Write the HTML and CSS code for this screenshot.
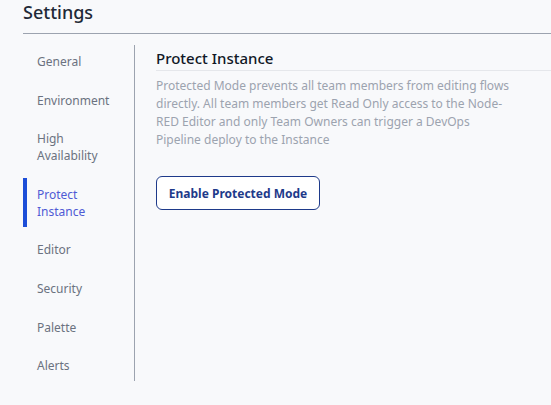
FILE: index.html
```html
<!DOCTYPE html>
<html>
<head>
<meta charset="utf-8">
<link rel="stylesheet" href="styles.css">
</head>
<body>
<div class="page">
  <h1 class="title">Settings</h1>
  <div class="layout">
    <nav class="nav">
      <a class="nav-item">General</a>
      <a class="nav-item">Environment</a>
      <a class="nav-item">High<br>Availability</a>
      <a class="nav-item active">Protect<br>Instance</a>
      <a class="nav-item">Editor</a>
      <a class="nav-item">Security</a>
      <a class="nav-item">Palette</a>
      <a class="nav-item">Alerts</a>
    </nav>
    <main class="content">
      <h2 class="section-title">Protect Instance</h2>
      <p class="desc">Protected Mode prevents all team members from editing flows directly. All team members get Read Only access to the Node-RED Editor and only Team Owners can trigger a DevOps Pipeline deploy to the Instance</p>
      <button class="btn">Enable Protected Mode</button>
    </main>
  </div>
</div>
</body>
</html>
```
FILE: styles.css
```css
* { box-sizing: border-box; }
html, body {
  margin: 0;
  padding: 0;
  background: #f8f9fb;
  font-family: "Noto Sans", "Open Sans", sans-serif;
  width: 551px;
  height: 405px;
  overflow: hidden;
}
.page {
  padding-left: 23px;
}
.title {
  margin: 0;
  font-size: 18px;
  font-weight: 500;
  line-height: 24px;
  color: #1f2937;
  height: 34px;
  border-bottom: 1px solid #9ca3af;
}
.layout {
  display: flex;
  padding-top: 8px;
}
.nav {
  position: relative;
  width: 112px;
  flex: none;
  display: flex;
  flex-direction: column;
}
.nav::after {
  content: "";
  position: absolute;
  right: 0;
  top: 3px;
  bottom: 4px;
  width: 1px;
  background: #9ca3af;
}
.nav-item {
  position: relative;
  display: block;
  padding: 11px 0 10.6px 14px;
  font-size: 12px;
  line-height: 17px;
  color: #6b7280;
}
.nav-item.active {
  color: #4f5bd5;
}
.nav-item.active::before {
  content: "";
  position: absolute;
  left: 0;
  top: 3px;
  bottom: 3px;
  width: 4px;
  background: #1d4ed8;
}
.content {
  flex: 1;
  padding-left: 21px;
}
.section-title {
  margin: 0;
  font-size: 15px;
  font-weight: 500;
  line-height: 20px;
  color: #111827;
  padding-top: 6px;
  padding-bottom: 2px;
  border-bottom: 1px solid #e5e7eb;
}
.desc {
  margin: 6px 0 0;
  width: 356px;
  font-size: 12px;
  line-height: 18px;
  color: #9ca3af;
}
.btn {
  margin-top: 27px;
  width: 164px;
  height: 34px;
  border: 1px solid #1e3a8a;
  border-radius: 6px;
  background: #ffffff;
  color: #1e3a8a;
  font-family: inherit;
  font-size: 12px;
  font-weight: 700;
  padding: 0;
}
```
